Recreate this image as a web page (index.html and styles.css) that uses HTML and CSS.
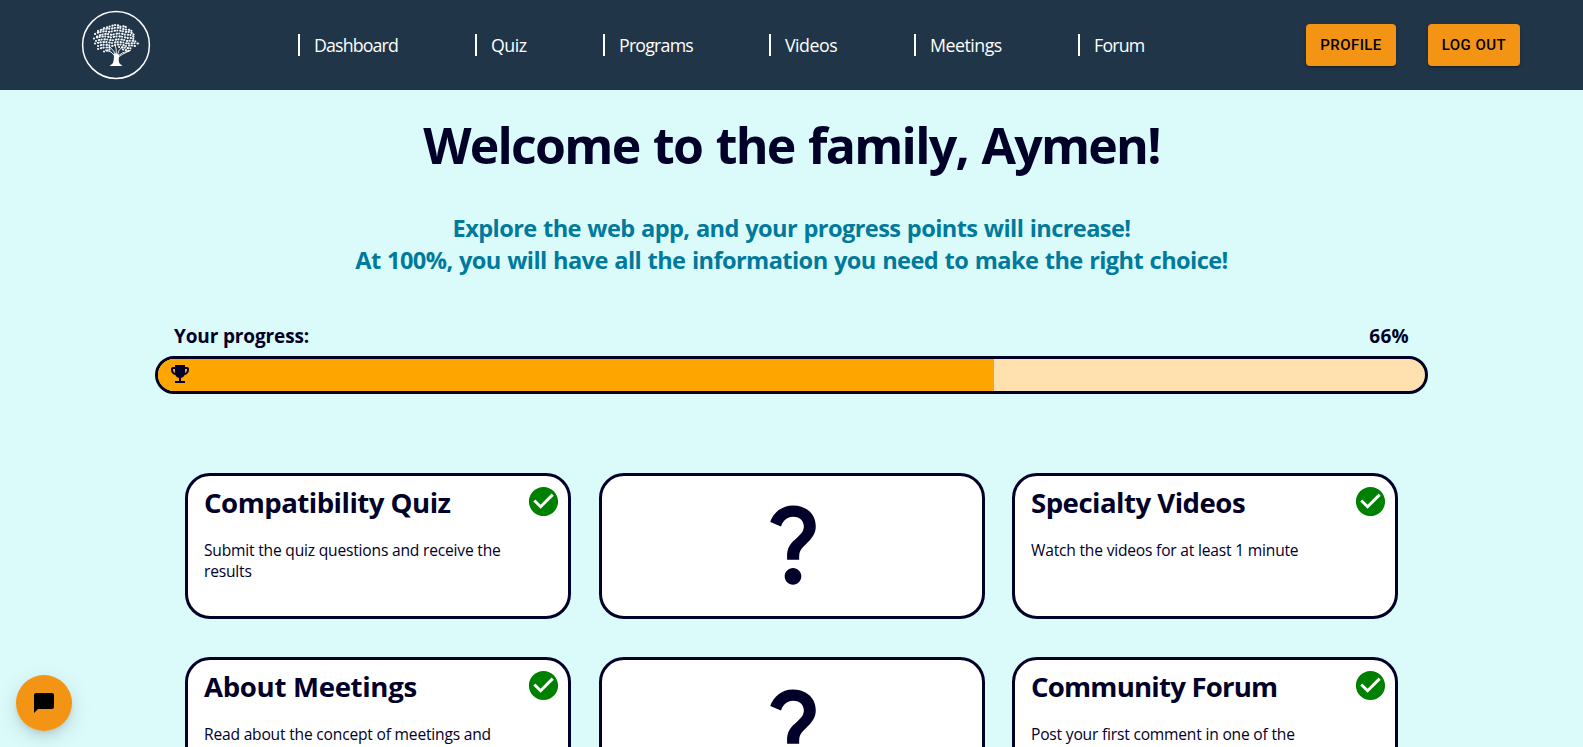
FILE: index.html
```html
<!DOCTYPE html>
<html lang="en">
<head>
<meta charset="utf-8">
<title>Dashboard</title>
<link rel="stylesheet" href="styles.css">
</head>
<body>
<header class="header">
  <svg class="logo" viewBox="0 0 70 70" aria-label="Tree logo">
    <circle cx="35" cy="35" r="33.4" fill="none" stroke="#fff" stroke-width="1.5"/>
    <g class="leaves">
      <path d="M23 18Q28 17 32 15.5Q36 14 40 17Q44 15 47 19"/>
      <path d="M17 21Q24 18 30 19Q37 16 43 19.5Q49 19 52 22"/>
      <path d="M14 24Q22 20 29 22Q37 19 44 22Q50 21 53 25"/>
      <path d="M16 26.5Q24 22.5 31 25Q38 22 45 25Q50 24 53 27"/>
      <path d="M13 28.5Q22 25 30 27.5Q38 25 46 28Q51 27 54 30"/>
      <path d="M15 31Q23 28 31 30.5Q39 28 46 31Q51 30 56 32"/>
      <path d="M14 33.5Q23 31 31 33Q39 31 46 33.5Q51 33 57 33.5"/>
      <path d="M17 36Q24 33.5 31 36Q39 33 45 36Q50 35 54 36"/>
      <path d="M17 39Q24 36.5 31 38M38 37Q45 38 52 38.5"/>
      <path d="M23 41.5L29 39.5M42 39.5L49 41"/>
    </g>
    <path class="branches" d="M34 46Q31 41 24 40M35 47Q34 41 28 36M35 46Q36 40 34 34M36 46Q37 40 42 36M36 48Q41 44 50 40M37 46Q41 42 48 41"/>
    <path d="M32.6 43.5Q34 45 35.2 42.5L36.4 45 38.4 44Q37 51 38.6 53.5L41.5 56H28.5L31.6 53.5Q33.5 50 32.6 43.5Z" fill="#fff"/>
  </svg>
  <nav class="nav">
    <a class="nav-link wide-word">Dashboard</a>
    <a class="nav-link">Quiz</a>
    <a class="nav-link programs">Programs</a>
    <a class="nav-link">Videos</a>
    <a class="nav-link">Meetings</a>
    <a class="nav-link programs">Forum</a>
  </nav>
  <div class="actions">
    <button class="button">PROFILE</button>
    <button class="button">LOG OUT</button>
  </div>
</header>

<main class="main">
  <h1 class="title">Welcome to the family, Aymen!</h1>
  <p class="subtitle">Explore the web app, and your progress points will increase!<br><span class="subtitle-second">At 100%, you will have all the information you need to make the right choice!</span></p>

  <section class="progress">
    <div class="progress-labels"><span>Your progress:</span><span class="percent">66%</span></div>
    <div class="bar">
      <div class="bar-fill" style="width:66%">
        <svg class="trophy" viewBox="0 0 24 24"><path d="M19 5h-2V3H7v2H5c-1.1 0-2 .9-2 2v1c0 2.55 1.92 4.63 4.39 4.94.63 1.5 1.98 2.63 3.61 2.96V19H7v2h10v-2h-4v-3.1c1.63-.33 2.98-1.46 3.61-2.96C19.08 12.63 21 10.55 21 8V7c0-1.1-.9-2-2-2zM5 8V7h2v3.82C5.84 10.4 5 9.3 5 8zm14 0c0 1.3-.84 2.4-2 2.82V7h2v1z"/></svg>
      </div>
    </div>
  </section>

  <section class="cards">
    <article class="card">
      <h2 class="card-title">Compatibility Quiz</h2>
      <p class="card-text">Submit the quiz questions and receive the results</p>
      <svg class="check" viewBox="0 0 24 24"><path d="M12 2C6.48 2 2 6.48 2 12s4.48 10 10 10 10-4.48 10-10S17.52 2 12 2zm-2 15-5-5 1.41-1.41L10 14.17l7.59-7.59L19 8l-9 9z"/></svg>
    </article>
    <article class="card card-locked">
      <svg class="question" viewBox="0 0 24 24"><path d="M11.07 12.85c.77-1.39 2.25-2.21 3.11-3.44.91-1.29.4-3.7-2.18-3.7-1.69 0-2.52 1.28-2.87 2.34L6.54 6.96C7.25 4.83 9.18 3 11.99 3c2.35 0 3.96 1.07 4.78 2.41.7 1.15 1.11 3.3.03 4.9-1.2 1.77-2.35 2.31-2.97 3.45-.25.46-.35.76-.35 2.24h-2.89c-.01-.78-.13-2.05.48-3.15zM14 20c0 1.1-.9 2-2 2s-2-.9-2-2 .9-2 2-2 2 .9 2 2z"/></svg>
    </article>
    <article class="card">
      <h2 class="card-title">Specialty Videos</h2>
      <p class="card-text">Watch the videos for at least 1 minute</p>
      <svg class="check" viewBox="0 0 24 24"><path d="M12 2C6.48 2 2 6.48 2 12s4.48 10 10 10 10-4.48 10-10S17.52 2 12 2zm-2 15-5-5 1.41-1.41L10 14.17l7.59-7.59L19 8l-9 9z"/></svg>
    </article>
    <article class="card">
      <h2 class="card-title meetings-title">About Meetings</h2>
      <p class="card-text">Read about the concept of meetings and</p>
      <svg class="check" viewBox="0 0 24 24"><path d="M12 2C6.48 2 2 6.48 2 12s4.48 10 10 10 10-4.48 10-10S17.52 2 12 2zm-2 15-5-5 1.41-1.41L10 14.17l7.59-7.59L19 8l-9 9z"/></svg>
    </article>
    <article class="card card-locked">
      <svg class="question" viewBox="0 0 24 24"><path d="M11.07 12.85c.77-1.39 2.25-2.21 3.11-3.44.91-1.29.4-3.7-2.18-3.7-1.69 0-2.52 1.28-2.87 2.34L6.54 6.96C7.25 4.83 9.18 3 11.99 3c2.35 0 3.96 1.07 4.78 2.41.7 1.15 1.11 3.3.03 4.9-1.2 1.77-2.35 2.31-2.97 3.45-.25.46-.35.76-.35 2.24h-2.89c-.01-.78-.13-2.05.48-3.15zM14 20c0 1.1-.9 2-2 2s-2-.9-2-2 .9-2 2-2 2 .9 2 2z"/></svg>
    </article>
    <article class="card">
      <h2 class="card-title forum-title">Community Forum</h2>
      <p class="card-text">Post your first comment in one of the</p>
      <svg class="check" viewBox="0 0 24 24"><path d="M12 2C6.48 2 2 6.48 2 12s4.48 10 10 10 10-4.48 10-10S17.52 2 12 2zm-2 15-5-5 1.41-1.41L10 14.17l7.59-7.59L19 8l-9 9z"/></svg>
    </article>
  </section>
</main>

<button class="chat" aria-label="Chat">
  <svg class="chat-icon" viewBox="0 0 24 24"><path d="M20 2H4c-1.1 0-1.99.9-1.99 2L2 22l4-4h14c1.1 0 2-.9 2-2V4c0-1.1-.9-2-2-2z"/></svg>
</button>
</body>
</html>
```
FILE: styles.css
```css
* { box-sizing: border-box; }

body {
  margin: 0;
  height: 747px;
  overflow: hidden;
  background: #dbfafa;
  color: #000028;
  font-family: "Segoe UI", "Open Sans", "Noto Sans", sans-serif;
}

h1, h2, p { margin: 0; }

.header {
  display: flex;
  align-items: center;
  height: 90px;
  padding: 0 63px 0 81px;
  background: #213549;
}

.logo { width: 70px; height: 70px; flex: none; }

.leaves {
  fill: none;
  stroke: #f1f4f6;
  stroke-width: 2.1;
  stroke-linecap: round;
  stroke-dasharray: 0.1 2.8 0.5 2.3;
}

.branches { fill: none; stroke: #fff; stroke-width: 0.9; }

.nav {
  display: grid;
  grid-template-columns: 177px 128px 166px 145px 164px 80px;
  margin-left: 147px;
}

.nav-link {
  height: 22px;
  padding-left: 14px;
  border-left: 2px solid #fff;
  color: #fff;
  font-size: 17.8px;
  line-height: 23px;
  letter-spacing: -0.5px;
}

.wide-word { letter-spacing: -0.87px; }
.programs { letter-spacing: -0.8px; }

.actions { display: flex; gap: 32px; margin-left: auto; }

.button {
  height: 42px;
  padding: 0 14px;
  border: 0;
  border-radius: 4px;
  background: #f49414;
  color: #000;
  font: 500 15px/42px Roboto, sans-serif;
  letter-spacing: 0.43px;
  box-shadow: 0 3px 1px -2px rgba(0,0,0,.2), 0 2px 2px rgba(0,0,0,.14), 0 1px 5px rgba(0,0,0,.12);
}

.title {
  padding-top: 21px;
  font-size: 50px;
  font-weight: 700;
  line-height: 68px;
  letter-spacing: -1.72px;
  word-spacing: 2.2px;
  text-align: center;
}

.subtitle {
  margin-top: 33px;
  color: #007a9c;
  font-size: 23.6px;
  font-weight: 700;
  line-height: 32px;
  letter-spacing: -0.6px;
  word-spacing: 0.9px;
  text-align: center;
}

.subtitle-second { letter-spacing: -0.59px; }

.progress { width: 1273px; margin: 44px auto 0; }

.progress-labels {
  display: flex;
  justify-content: space-between;
  padding: 0 19px;
  font-size: 19px;
  font-weight: 700;
  line-height: 32px;
  letter-spacing: -0.14px;
}

.percent { letter-spacing: 0.3px; }

.bar {
  height: 38px;
  margin-top: 4px;
  overflow: hidden;
  border: 3px solid #000028;
  border-radius: 20px;
  background: #ffe1b0;
}

.bar-fill { height: 100%; padding: 3px 10px; background: #ffa500; }

.trophy { display: block; width: 24px; height: 24px; fill: #000028; }

.cards {
  display: grid;
  grid-template-columns: repeat(3, 1fr);
  grid-auto-rows: 146px;
  gap: 38px 27.5px;
  width: 1213px;
  height: 274px;
  overflow: hidden;
  margin: 79px auto 0;
}

.card {
  position: relative;
  padding: 7px 58px 0 16px;
  border: 3px solid #000028;
  border-radius: 25px;
  background: #fff;
}

.card-title {
  font-size: 27.6px;
  font-weight: 700;
  line-height: 38px;
  letter-spacing: -0.52px;
  white-space: nowrap;
}

.meetings-title { letter-spacing: -0.32px; }
.forum-title { letter-spacing: -0.8px; }

.card-text {
  margin-top: 19px;
  font-size: 15.6px;
  line-height: 21px;
  letter-spacing: -0.2px;
}

.check {
  position: absolute;
  top: 8px;
  right: 7px;
  width: 35px;
  height: 35px;
  fill: #008000;
}

.card-locked { display: flex; justify-content: center; padding: 17px 0 0 3px; }

.question { width: 100px; height: 100px; fill: #000028; }

.chat {
  position: fixed;
  left: 16px;
  bottom: 16px;
  display: grid;
  place-items: center;
  width: 56px;
  height: 56px;
  padding: 0;
  border: 0;
  border-radius: 50%;
  background: #f49414;
  box-shadow: 0 3px 5px -1px rgba(0,0,0,.06), 0 6px 10px rgba(0,0,0,.06), 0 6px 22px rgba(0,0,0,.12);
}

.chat-icon { width: 24px; height: 24px; }
```
